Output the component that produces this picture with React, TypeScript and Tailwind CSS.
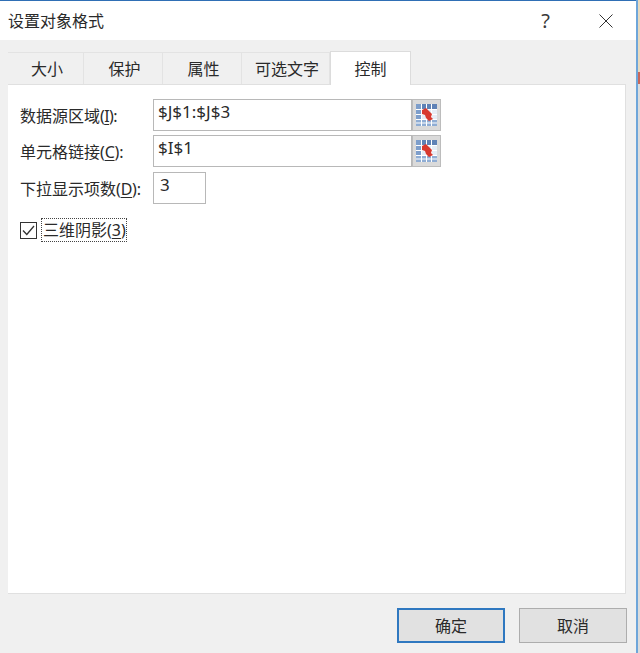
const FONT = "font-['Noto_Sans','Noto_Sans_CJK_SC',sans-serif]";

function RefIcon() {
  return (
    <svg width="21" height="22" viewBox="0 0 21 22">
      <rect x="0" y="0" width="21" height="22" fill="#e6ecf5" />
      <rect x="0" y="0" width="21" height="5" fill="#5f82b6" />
      <rect x="0" y="0" width="5" height="22" fill="#7d9ecb" />
      <rect x="0" y="16" width="21" height="6" fill="#8fadd4" />
      <path d="M0 5.5H21M0 10.5H21M0 15.5H21M0 19H21M5.5 0V22M10.5 0V22M15.5 0V22" stroke="#ffffff" strokeWidth="1" />
      <path d="M6 6L10 4L13 7L16 10L15 13L17 15L13 17L10 14L9 11L6 10Z" fill="#d8392f" />
    </svg>
  );
}

function RefButton() {
  return (
    <div className="w-[29px] h-full shrink-0 bg-[#dadada] border border-[#bcbcbc] flex items-center justify-center">
      <RefIcon />
    </div>
  );
}

function Label({ text, k, tight }: { text: string; k: string; tight?: boolean }) {
  return (
    <div className="text-[16px] leading-none text-[#2a2a2a] whitespace-nowrap w-[133px] pt-px">
      {text}
      <span className={tight ? "tracking-[-0.6px]" : "tracking-[-0.2px]"}>
        (<span className="underline underline-offset-2">{k}</span>):
      </span>
    </div>
  );
}

function Field({ value }: { value: string }) {
  return (
    <div className="flex flex-1 h-full bg-white border border-[#b8b8b8] pl-[4px] text-[17px] leading-[23px] text-[#2a2a2a]">
      {value}
    </div>
  );
}

const TABS = [
  { t: "大小", w: "w-[76px]" },
  { t: "保护", w: "w-[79px]" },
  { t: "属性", w: "w-[79px]" },
  { t: "可选文字", w: "w-[88px]" },
];

export default function App() {
  return (
    <div className={`w-[640px] h-[653px] flex overflow-hidden bg-[#dcdcdc] ${FONT}`}>
      <div className="w-[636px] h-full shrink-0 flex flex-col border-t border-[#2f6fb5] bg-[#f0f0f0]">
        <div className="h-[39px] shrink-0 bg-white flex items-center pl-2 pr-[20px] text-[16px] text-[#2a2a2a]">
          <span className="flex-1 leading-none">设置对象格式</span>
          <span className="text-[20px] leading-none mr-[49px] text-[#3a3a3a]">?</span>
          <svg width="14" height="14" viewBox="0 0 14 14" className="mr-[3px]">
            <path d="M0.5 0.5L13.5 13.5M13.5 0.5L0.5 13.5" stroke="#333" strokeWidth="1" />
          </svg>
        </div>

        <div className="flex items-end h-[44px] shrink-0 pl-2 pt-[11px]">
          {TABS.map((x) => (
            <div
              key={x.t}
              className={`${x.w} h-[32px] flex items-center justify-center pl-[3px] bg-[#f0f0f0] border-t border-r border-[#e3e3e3] text-[16px] text-[#2a2a2a]`}
            >
              {x.t}
            </div>
          ))}
          <div className="w-[81px] h-[34px] flex items-center justify-center bg-white border-x border-t border-[#dcdcdc] text-[16px] text-[#2a2a2a] relative z-10 -mb-px">
            控制
          </div>
        </div>

        <div className="ml-2 w-[618px] h-[510px] shrink-0 bg-white border-t border-b border-r border-[#e0e0e0] pl-3 pt-[14px] flex flex-col">
          <div className="flex items-center h-[32px]">
            <Label text="数据源区域" k="I" tight />
            <div className="flex h-full w-[288px]">
              <Field value="$J$1:$J$3" />
              <RefButton />
            </div>
          </div>
          <div className="flex items-center h-[32px] mt-[4px]">
            <Label text="单元格链接" k="C" />
            <div className="flex h-full w-[288px]">
              <Field value="$I$1" />
              <RefButton />
            </div>
          </div>
          <div className="flex items-center h-[32px] mt-[5px]">
            <Label text="下拉显示项数" k="D" />
            <div className="w-[53px] h-full bg-white border border-[#b8b8b8] pl-[6px] text-[17px] leading-[23px] text-[#2a2a2a]">
              3
            </div>
          </div>
          <div className="flex items-center h-[24px] mt-[14px]">
            <div className="w-[17px] h-[17px] border border-[#333] bg-white flex items-center justify-center">
              <svg width="13" height="11" viewBox="0 0 13 11">
                <path d="M1 5.5L4.8 9.5L12 1" fill="none" stroke="#333" strokeWidth="1.3" />
              </svg>
            </div>
            <div className="ml-1 w-[86px] h-[24px] border border-dotted border-[#444] flex items-center pl-[1px] text-[16px] leading-none text-[#2a2a2a] whitespace-nowrap">
              三维阴影(<span className="underline underline-offset-2">3</span>)
            </div>
          </div>
        </div>

        <div className="flex justify-end gap-[14px] pt-[14px] pr-[9px]">
          <div className="w-[108px] h-[35px] bg-[#e1e1e1] border-2 border-[#2f78c0] flex items-center justify-center text-[16px] text-[#2a2a2a]">
            确定
          </div>
          <div className="w-[108px] h-[35px] bg-[#e1e1e1] border border-[#adadad] flex items-center justify-center text-[16px] text-[#2a2a2a]">
            取消
          </div>
        </div>
      </div>
      <div className="w-[2px] h-full shrink-0 bg-[#6ea6da]" />
      <div className="w-[2px] h-full shrink-0 flex flex-col">
        <div className="h-[72px] bg-[#e8d9bf]" />
        <div className="h-[12px] bg-[#c9675a]" />
        <div className="flex-1 bg-[#dcdcdc]" />
      </div>
    </div>
  );
}
